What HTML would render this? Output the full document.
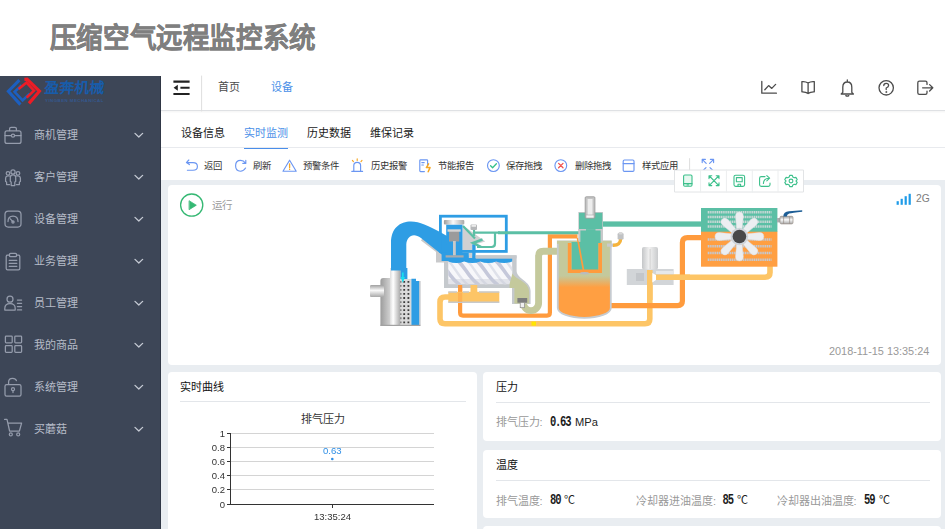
<!DOCTYPE html>
<html lang="zh-CN">
<head>
<meta charset="utf-8">
<title>压缩空气远程监控系统</title>
<style>
*{box-sizing:border-box;margin:0;padding:0}
html,body{width:945px;height:529px;overflow:hidden;background:#fff}
body{font-family:"Liberation Sans",sans-serif;position:relative;color:#333}
.abs{position:absolute}
.t{position:absolute;white-space:nowrap;line-height:1}
#title{left:49.8px;top:25.4px;font-size:26.5px;font-weight:bold;color:#7f7f7f;letter-spacing:.6px;transform:scaleY(1.07);transform-origin:0 50%;-webkit-text-stroke:.35px #7f7f7f}
#sidebar{left:0;top:76px;width:161px;height:480px;background:#3d4657;border-right:1.5px solid #303746}
#app{left:161px;top:76px;width:799px;height:480px;background:#e9edf1}
#topbar{left:161px;top:76px;width:799px;height:35px;background:#fff;box-shadow:0 1px 2px rgba(0,0,0,.05);border-bottom:1px solid #dfe1e4}
#tabs{left:161px;top:110px;width:799px;height:38px;background:#fff;border-bottom:1px solid #e8eaee}
#toolbar{left:161px;top:148px;width:799px;height:32px;background:#fff}
.panel{position:absolute;background:#fff;border-radius:4px}
.menu{position:absolute;left:34px;font-size:11px;color:#b6bcc8;white-space:nowrap;line-height:1}
.tb{position:absolute;top:161.5px;font-size:9.35px;color:#333;white-space:nowrap;line-height:1}
.tab{position:absolute;top:127.5px;font-size:11px;color:#1a1a1a;white-space:nowrap;line-height:1}
.lbl{position:absolute;font-size:11px;color:#999;white-space:nowrap;line-height:1}
.hd{position:absolute;font-size:11px;color:#111;white-space:nowrap;line-height:1}
.val{position:absolute;font-size:11px;color:#222;white-space:nowrap;line-height:1}
.seg{position:absolute;top:0;font-family:"Liberation Mono",monospace;font-weight:bold;font-size:10.5px;letter-spacing:-1.1px;color:#1c1c1c;white-space:nowrap;line-height:1;transform:scaleY(1.36);transform-origin:50% 55%}
.hr{position:absolute;height:1px;background:#e3e6ea}
svg{position:absolute;left:0;top:0;overflow:visible}
#wrap{position:absolute;left:0;top:0;width:960px;height:560px;filter:blur(.38px)}
</style>
</head>
<body>
<div class="t" id="title">压缩空气远程监控系统</div>

<div id="wrap">
<div class="abs" id="sidebar"></div>
<div class="abs" id="app"></div>
<div class="abs" id="tabs"></div>
<div class="abs" id="toolbar"></div>
<div class="abs" id="topbar"></div>

<div class="t" style="left:43.5px;top:80.5px;font-size:14.8px;font-weight:900;color:#185caa;transform:skewX(-4deg);transform-origin:0 100%">盈奔机械</div>
<div class="t" style="left:45px;top:98.8px;font-size:4.4px;font-weight:bold;color:#35588e;letter-spacing:.45px">YINGBEN MECHANICAL</div>
<!-- sidebar menu text -->
<div class="menu" style="top:129.5px">商机管理</div>
<div class="menu" style="top:171.5px">客户管理</div>
<div class="menu" style="top:213.5px">设备管理</div>
<div class="menu" style="top:255.5px">业务管理</div>
<div class="menu" style="top:297.5px">员工管理</div>
<div class="menu" style="top:339.5px">我的商品</div>
<div class="menu" style="top:381.5px">系统管理</div>
<div class="menu" style="top:423.5px">买蘑菇</div>

<!-- topbar -->
<div class="t" style="left:218px;top:82.3px;font-size:11px;color:#4a4a4a">首页</div>
<div class="t" style="left:271px;top:82.3px;font-size:11px;color:#4a90e8">设备</div>

<!-- tabs -->
<div class="tab" style="left:181px">设备信息</div>
<div class="tab" style="left:244px;color:#4a90e8">实时监测</div>
<div class="tab" style="left:307px">历史数据</div>
<div class="tab" style="left:370px">维保记录</div>
<div class="abs" style="left:244px;top:147.8px;width:44px;height:1.6px;background:#4a8eea"></div>

<!-- toolbar text -->
<div class="tb" style="left:204px">返回</div>
<div class="tb" style="left:253px">刷新</div>
<div class="tb" style="left:302.5px">预警条件</div>
<div class="tb" style="left:370.5px">历史报警</div>
<div class="tb" style="left:438px">节能报告</div>
<div class="tb" style="left:506px">保存拖拽</div>
<div class="tb" style="left:574.5px">删除拖拽</div>
<div class="tb" style="left:641.5px">样式应用</div>

<!-- panels -->
<div class="panel" id="p-main" style="left:168px;top:185px;width:773px;height:180px"></div>
<div class="panel" id="p-chart" style="left:168px;top:372px;width:309px;height:170px"></div>
<div class="panel" id="p-press" style="left:483px;top:372px;width:458px;height:69px"></div>
<div class="panel" id="p-temp" style="left:483px;top:450px;width:458px;height:68px"></div>
<div class="panel" id="p-next" style="left:483px;top:526px;width:458px;height:20px"></div>

<div class="t" style="left:211.6px;top:200px;font-size:10.5px;color:#9a9a9a">运行</div>
<div class="t" style="left:916px;top:194.3px;font-size:10.3px;color:#7d7d7d">2G</div>
<div class="t" style="left:829px;top:346px;font-size:10.9px;color:#999">2018-11-15 13:35:24</div>

<!-- chart panel -->
<div class="hd" style="left:180px;top:382px">实时曲线</div>
<div class="hr" style="left:180px;top:401px;width:286px"></div>
<div class="t" style="left:301px;top:413.5px;font-size:11px;color:#333">排气压力</div>

<!-- pressure panel -->
<div class="hd" style="left:495.5px;top:382.4px">压力</div>
<div class="hr" style="left:495.5px;top:401.5px;width:434px"></div>
<div class="lbl" style="left:495.5px;top:417.2px">排气压力:</div>
<div class="seg" style="left:550px;top:417.2px;letter-spacing:-1.25px">0.63</div><div class="val" style="left:574.6px;top:416.4px;font-size:11.7px;transform:scaleX(.95);transform-origin:0 0">MPa</div>

<!-- temperature panel -->
<div class="hd" style="left:495.5px;top:460.1px">温度</div>
<div class="hr" style="left:495.5px;top:480px;width:434px"></div>
<div class="lbl" style="left:495.5px;top:495.5px">排气温度:</div>
<div class="seg" style="left:550px;top:495px">80</div><div class="val" style="left:564.2px;top:495.2px">℃</div>
<div class="lbl" style="left:636px;top:495.5px">冷却器进油温度:</div>
<div class="seg" style="left:722.6px;top:495px">85</div><div class="val" style="left:737.2px;top:495.2px">℃</div>
<div class="lbl" style="left:776.5px;top:495.5px">冷却器出油温度:</div>
<div class="seg" style="left:864px;top:495px">59</div><div class="val" style="left:878.6px;top:495.2px">℃</div>

<!--SVG-ICONS-START-->
<svg id="icons" width="945" height="529" viewBox="0 0 945 529" fill="none" stroke-linecap="round" stroke-linejoin="round">
<!-- logo -->
<g stroke-linecap="butt" stroke-linejoin="miter">
<path d="M19.4 80.2 L8.4 91.2 L20.4 104.6" stroke="#1c5fc0" stroke-width="3.1"/>
<path d="M21.6 85.2 L14.6 91.8 L22.6 100.4 L29.6 93.6" stroke="#1c5fc0" stroke-width="2.6"/>
<path d="M24.4 79.4 L27 79.2 L39.4 91.2 L29 103.4" stroke="#ee1c25" stroke-width="3.2"/>
<path d="M18.6 89 L26.6 82.6 L34 90.6 L26.6 97.6" stroke="#ee1c25" stroke-width="2.6"/>
</g>
<!-- sidebar icons -->
<g stroke="#959cac" stroke-width="1.25">
<!-- briefcase -->
<rect x="5" y="130.8" width="16" height="12.6" rx="2"/>
<path d="M9.6 130.6 V128.8 Q9.6 127.3 11.1 127.3 H14.9 Q16.4 127.3 16.4 128.8 V130.6 M5 135.6 H11.4 M14.6 135.6 H21"/>
<circle cx="13" cy="135.6" r="1.6"/>
<!-- people -->
<circle cx="13" cy="172" r="2.1"/><circle cx="8" cy="173.3" r="1.8"/><circle cx="18" cy="173.3" r="1.8"/>
<path d="M10.3 177.5 Q10.3 174.8 13 174.8 Q15.7 174.8 15.7 177.5 V181.5 L14.8 182 V185.5 H11.2 V182 L10.3 181.5 Z"/>
<path d="M9.8 176 Q5.6 175.3 5.6 178.5 V181.5 L6.6 182 V184.5 H9.6 M16.2 176 Q20.4 175.3 20.4 178.5 V181.5 L19.4 182 V184.5 H16.4"/>
<!-- gauge -->
<rect x="5" y="211" width="16" height="16" rx="3.2"/>
<path d="M8 221.5 Q8 216 13 216 Q18 216 18 221.5 M13 221.8 L10.3 218.8"/>
<circle cx="13" cy="222" r="1.1"/>
<!-- clipboard -->
<path d="M9.5 255.2 H7.6 Q6.2 255.2 6.2 256.6 V268.4 Q6.2 269.8 7.6 269.8 H18.4 Q19.8 269.8 19.8 268.4 V256.6 Q19.8 255.2 18.4 255.2 H16.5"/>
<rect x="9.5" y="253.3" width="7" height="3.4" rx="1"/>
<path d="M9.2 260.3 H16.8 M9.2 263.3 H16.8 M9.2 266.3 H16.8"/>
<!-- staff -->
<circle cx="10" cy="299.2" r="3"/>
<path d="M4.8 310 V308.5 Q4.8 303.6 10 303.6 Q15.2 303.6 15.2 308.5 V310 Z M17.4 300 H21.6 M17.4 303.3 H21.6 M17.4 306.6 H21.6 M17.4 309.9 H21.6"/>
<!-- grid -->
<rect x="5.4" y="336" width="6.8" height="6.8" rx=".8"/><rect x="14.8" y="336" width="6.8" height="6.8" rx=".8"/>
<rect x="5.4" y="345.6" width="6.8" height="6.8" rx=".8"/><rect x="14.8" y="345.6" width="6.8" height="6.8" rx=".8"/>
<!-- lock -->
<rect x="5" y="384.6" width="16" height="11.4" rx="1.6"/>
<path d="M8.6 384.4 V382 Q8.6 378.4 12.6 378.4 Q15.6 378.4 16.4 380.6 M13 390.6 V392.6"/>
<circle cx="13" cy="389.2" r="1.5"/>
<!-- cart -->
<path d="M4.6 419.4 H7 L9.6 431 H19.4 L21.6 423.2 H7.9"/>
<circle cx="10.8" cy="434.4" r="1.5"/><circle cx="18.2" cy="434.4" r="1.5"/>
</g>
<!-- chevrons -->
<g stroke="#c5cad4" stroke-width="1.3">
<path d="M135 133.4 L138.8 137 L142.6 133.4 M135 175.4 L138.8 179 L142.6 175.4 M135 217.4 L138.8 221 L142.6 217.4 M135 259.4 L138.8 263 L142.6 259.4 M135 301.4 L138.8 305 L142.6 301.4 M135 343.4 L138.8 347 L142.6 343.4 M135 385.4 L138.8 389 L142.6 385.4 M135 427.4 L138.8 431 L142.6 427.4"/>
</g>

<!-- topbar left: menu -->
<g stroke="#222" stroke-width="2.1" stroke-linecap="butt">
<path d="M173.4 81.6 H189.6 M180.4 87.8 H189.6 M173.4 94 H189.6"/>
<path d="M173.6 87.8 L177.8 84.8 V90.8 Z" fill="#222" stroke="none"/>
</g>
<path d="M201.6 76 V111" stroke="#dedede" stroke-width="1"/>

<!-- topbar right icons -->
<g stroke="#4c4c4c" stroke-width="1.3">
<path d="M761.8 81.4 V93.2 H776.4 M764.8 89.8 L768.6 85.6 L771.8 88.4 L775.6 84.4"/>
<path d="M808.1 83 V93.6 M808.1 83 Q805.5 81.2 801.9 81.6 V91.8 Q805.5 91.6 808.1 93.4 Q810.7 91.6 814.3 91.8 V81.6 Q810.7 81.2 808.1 83 Z"/>
<path d="M847.3 80 V81.4 M842.8 92.4 V87.2 Q842.8 82 847.3 82 Q851.8 82 851.8 87.2 V92.4 L853.4 94 H841.2 Z M845.8 95.6 Q847.3 96.6 848.8 95.6"/>
<circle cx="886.2" cy="87.8" r="7.2"/>
<path d="M883.8 85.6 Q883.8 83.4 886.2 83.4 Q888.6 83.4 888.6 85.5 Q888.6 87 886.2 88 V89.6" stroke-width="1.3"/>
<circle cx="886.2" cy="92" r=".5" fill="#444" stroke-width=".8"/>
<path d="M927 84.4 V82.8 Q927 81.2 925.4 81.2 H919.4 Q917.8 81.2 917.8 82.8 V92.8 Q917.8 94.4 919.4 94.4 H925.4 Q927 94.4 927 92.8 V91.2 M922.6 87.8 H932.6 M929.6 84.6 L932.8 87.8 L929.6 91"/>
</g>

<!-- toolbar icons -->
<g stroke="#6b96f2" stroke-width="1.15">
<!-- back -->
<path d="M188.8 160 L186.4 162.6 L189.4 164.6 M186.8 162.6 H193 Q197.4 162.6 197.4 166.4 Q197.4 170.2 193 170.2 H187.4"/>
<!-- refresh -->
<path d="M245.6 168 Q243.6 171.2 240.4 171.2 Q235.6 171.2 235.6 165.8 Q235.6 160.4 240.6 160.4 Q243.6 160.4 245.4 163 M245.8 160.4 V163.4 H242.8"/>
<!-- warning -->
<path d="M289.6 160.2 L296.2 171.2 H283 Z" stroke-linejoin="round"/>
<path d="M289.6 164 V167.6 M289.6 169.2 V169.4" stroke="#f5a623" stroke-width="1.3"/>
<!-- alarm history -->
<path d="M353.8 171.2 V165.6 Q353.8 162.4 357.2 162.4 Q360.6 162.4 360.6 165.6 V171.2 M351.8 171.4 H362.6"/>
<path d="M357.2 158.8 V160.4 M352.4 160.4 L353.4 161.6 M362 160.4 L361 161.6" stroke="#f5a623"/>
<!-- energy report -->
<path d="M427.6 165 V160.6 Q427.6 159.8 426.8 159.8 H420.6 Q419.8 159.8 419.8 160.6 V170.8 Q419.8 171.6 420.6 171.6 H424.4 M421.8 162.6 H424.2 M421.8 165 H423.4"/>
<path d="M428.6 163.8 L426.4 167.6 H430 L428.2 171.8" stroke="#f5a623" stroke-width="1.5"/>
<!-- save drag -->
<circle cx="493.4" cy="165.6" r="5.9"/>
<path d="M490.6 165.8 L492.6 167.8 L496.4 163.8" stroke="#35c08a" stroke-width="1.3"/>
<!-- style apply -->
<rect x="623.2" y="160" width="10.8" height="11.4" rx="1.2"/>
<path d="M623.2 163.6 H634"/>
<!-- expand -->
<path d="M702.2 162.6 V159.4 H705.4 M702.4 159.6 L706.2 163.4 M713.6 162.6 V159.4 H710.4 M713.4 159.6 L709.6 163.4 M706 167.6 L702.6 171 M710 167.6 L713.4 171"/>
</g>
<!-- delete drag -->
<circle cx="560.8" cy="165.6" r="5.9" stroke="#6b96f2" stroke-width="1.15"/>
<path d="M558.6 163.4 L563 167.8 M563 163.4 L558.6 167.8" stroke="#f0524f" stroke-width="1.3"/>
<path d="M689.6 158.6 V172" stroke="#ddd" stroke-width="1"/>

<!-- play -->
<circle cx="191.7" cy="205.1" r="11.1" stroke="#35b873" stroke-width="1.3"/>
<path d="M189.4 200.9 L196.3 205.2 L189.4 209.5 Z" fill="#35b873" stroke="#35b873" stroke-width=".8"/>

<!-- signal -->
<g fill="#1e9be8" stroke="none">
<rect x="896.6" y="201.2" width="2.2" height="3.6"/><rect x="900.6" y="198.8" width="2.2" height="6"/><rect x="904.6" y="196.2" width="2.2" height="8.6"/><rect x="908.6" y="193.8" width="2.2" height="11"/>
</g>

<!-- floating toolbar -->
<rect x="674.9" y="170" width="128.6" height="22" fill="#fff" stroke="#e2e4e6" stroke-width="1"/>
<path d="M700.6 170 V192 M726.4 170 V192 M752.3 170 V192 M778 170 V192" stroke="#eceeef" stroke-width="1"/>
<g stroke="#3cc08b" stroke-width="1.1">
<rect x="683.6" y="175" width="8.4" height="11.2" rx="1.2" fill="#e6f8f0"/>
<path d="M683.6 183.6 H692 M687 185 H688.6" />
<path d="M709.4 176 L718.6 185.4 M718.6 176 L709.4 185.4 M709 178.6 V175.8 H711.8 M716.2 175.8 H719 V178.6 M709 182.8 V185.6 H711.8 M716.2 185.6 H719 V182.8"/>
<rect x="734" y="175.2" width="10.6" height="11.2" rx="1.6"/>
<path d="M736.4 177.6 H742.2 V181.8 H736.4 Z M738 186.4 V184.2 H740.6 V186.4"/>
<path d="M765 176.6 H761.2 Q759.6 176.6 759.6 178.2 V184.8 Q759.6 186.4 761.2 186.4 H768.4 Q770 186.4 770 184.8 V183 M763.4 183.4 Q763.6 178.4 769 178.2 M766.8 175.6 L769.6 178.2 L766.8 180.8"/>
<circle cx="791" cy="181" r="1.9"/>
<path d="M789.7 175.4 H792.3 L792.8 177 L794.3 177.8 L795.9 177.4 L797.2 179.6 L796 180.8 V181.2 L797.2 182.4 L795.9 184.6 L794.3 184.2 L792.8 185 L792.3 186.6 H789.7 L789.2 185 L787.7 184.2 L786.1 184.6 L784.8 182.4 L786 181.2 V180.8 L784.8 179.6 L786.1 177.4 L787.7 177.8 L789.2 177 Z"/>
</g>
</svg>

<!--SVG-ICONS-END-->
<!--SVG-CHART-START-->
<svg id="chart" width="945" height="529" viewBox="0 0 945 529" font-family="Liberation Sans, sans-serif">
<g stroke="#d4d4d4" stroke-width="1" shape-rendering="crispEdges">
<path d="M231 433.5 H434 M231 447.5 H434 M231 461.5 H434 M231 475.5 H434 M231 489.5 H434"/>
</g>
<g stroke="#333" stroke-width="1" shape-rendering="crispEdges">
<path d="M230.5 433 V504.5 M227 504.5 H434 M227 433.5 H231 M227 447.5 H231 M227 461.5 H231 M227 475.5 H231 M227 489.5 H231 M332.5 504 V507.5"/>
</g>
<g font-size="9.5" fill="#333" text-anchor="end">
<text x="225" y="436.6">1</text><text x="225" y="450.8">0.8</text><text x="225" y="465">0.6</text><text x="225" y="479.2">0.4</text><text x="225" y="493.4">0.2</text><text x="225" y="507.6">0</text>
</g>
<text x="332.5" y="519.6" font-size="9.5" fill="#333" text-anchor="middle">13:35:24</text>
<text x="332.3" y="453.6" font-size="9.6" fill="#2f8fe6" text-anchor="middle">0.63</text>
<circle cx="332.3" cy="459" r="1.3" fill="#2f8fe6"/>
</svg>

<!--SVG-CHART-END-->
<!--SVG-DIAGRAM-START-->
<svg id="diagram" width="945" height="529" viewBox="0 0 945 529">
<defs>
<linearGradient id="gSilH" x1="0" x2="1" y1="0" y2="0"><stop offset="0" stop-color="#9a9a9a"/><stop offset=".45" stop-color="#fafafa"/><stop offset="1" stop-color="#a8a8a8"/></linearGradient>
<linearGradient id="gSilV" x1="0" x2="0" y1="0" y2="1"><stop offset="0" stop-color="#a0a0a0"/><stop offset=".45" stop-color="#fafafa"/><stop offset="1" stop-color="#a8a8a8"/></linearGradient>
<linearGradient id="gTank" x1="0" x2="0" y1="0" y2="1"><stop offset="0" stop-color="#c4c99c"/><stop offset=".45" stop-color="#c4c99c"/><stop offset=".6" stop-color="#ff9f42"/><stop offset="1" stop-color="#ff9f42"/></linearGradient>
<linearGradient id="gScrew" x1="0" x2="0" y1="0" y2="1"><stop offset="0" stop-color="#d9dbe0"/><stop offset=".5" stop-color="#f6f6f8"/><stop offset="1" stop-color="#cfd1d6"/></linearGradient>
<linearGradient id="gLtSil" x1="0" x2="1" y1="0" y2="0"><stop offset="0" stop-color="#c4c6c8"/><stop offset=".45" stop-color="#f2f2f2"/><stop offset="1" stop-color="#c9cbcd"/></linearGradient>
<linearGradient id="gBodyL" x1="0" x2="1" y1="0" y2="0"><stop offset="0" stop-color="#9c9c9c"/><stop offset="1" stop-color="#d6d6d6"/></linearGradient>
<linearGradient id="gTube" x1="0" x2="1" y1="0" y2="0"><stop offset="0" stop-color="#dcdcdc"/><stop offset=".3" stop-color="#ffffff"/><stop offset="1" stop-color="#a6a6a6"/></linearGradient>
</defs>

<!-- light orange pipes -->
<g fill="none" stroke="#fdc566" stroke-width="5.6" stroke-linejoin="round">
<path d="M450 297 H445 Q440 297 440 302 V319 Q440 323.7 445 323.7 H645 Q649.8 323.7 649.8 319 V270"/>
<path d="M652 277.3 H765 Q770 277.3 770 272.5 V265"/>
</g>
<rect x="531.5" y="321.6" width="4.5" height="4" fill="#ffe600"/>

<!-- dark orange pipes -->
<g fill="none" stroke="#ff9b3d" stroke-linejoin="round">
<path d="M460.1 285 V312.5 Q460.1 315.6 463 315.6 H547 Q549.9 315.6 549.9 312.5 V236.4 H577.5" stroke-width="4.2" stroke-linejoin="miter"/>
<path d="M610 305.7 H677.5 Q682.4 305.7 682.4 301 V242.5 Q682.4 237.6 687.4 237.6 H702" stroke-width="5.2"/>
</g>

<!-- olive pipe -->
<path d="M523.4 300 V303 A7.6 7.6 0 0 0 538.6 303 V256 Q538.6 251.2 543.5 251.2 H558" fill="none" stroke="#c4c99c" stroke-width="6.9"/>

<!-- teal right pipe -->
<rect x="600" y="221.4" width="102" height="5.3" fill="#5bbfa5"/>

<!-- air filter -->
<rect x="370" y="285" width="16" height="12" rx="2" fill="url(#gSilV)"/>
<path d="M380.4 281 Q380.4 278 383.4 278 H391 V325.7 H380.4 Z" fill="url(#gBodyL)"/>
<rect x="370" y="285" width="14" height="12" rx="1.5" fill="url(#gSilV)"/>
<rect x="390" y="268" width="10.6" height="57.7" fill="url(#gTube)"/>
<rect x="400.5" y="279" width="11" height="46.7" fill="#dadada"/>
<path d="M403.3 280.90h1.8v1.8h-1.8zM407.5 280.90h1.8v1.8h-1.8zM400.5 280.90h.8v1.8h-.8zM403.3 284.95h1.8v1.8h-1.8zM407.5 284.95h1.8v1.8h-1.8zM400.5 284.95h.8v1.8h-.8zM403.3 289.00h1.8v1.8h-1.8zM407.5 289.00h1.8v1.8h-1.8zM400.5 289.00h.8v1.8h-.8zM403.3 293.05h1.8v1.8h-1.8zM407.5 293.05h1.8v1.8h-1.8zM400.5 293.05h.8v1.8h-.8zM403.3 297.10h1.8v1.8h-1.8zM407.5 297.10h1.8v1.8h-1.8zM400.5 297.10h.8v1.8h-.8zM403.3 301.15h1.8v1.8h-1.8zM407.5 301.15h1.8v1.8h-1.8zM400.5 301.15h.8v1.8h-.8zM403.3 305.20h1.8v1.8h-1.8zM407.5 305.20h1.8v1.8h-1.8zM400.5 305.20h.8v1.8h-.8zM403.3 309.25h1.8v1.8h-1.8zM407.5 309.25h1.8v1.8h-1.8zM400.5 309.25h.8v1.8h-.8zM403.3 313.30h1.8v1.8h-1.8zM407.5 313.30h1.8v1.8h-1.8zM400.5 313.30h.8v1.8h-.8zM403.3 317.35h1.8v1.8h-1.8zM407.5 317.35h1.8v1.8h-1.8zM400.5 317.35h.8v1.8h-.8zM403.3 321.40h1.8v1.8h-1.8zM407.5 321.40h1.8v1.8h-1.8zM400.5 321.40h.8v1.8h-.8z" fill="#3c3c3c"/>
<path d="M411.4 278.8 H416 V281 H419.4 V325.7 H411.4 Z" fill="#2e9de4"/>
<rect x="400.5" y="268" width="6.9" height="11" fill="#2e9de4"/>
<rect x="419.4" y="281" width="1.1" height="44.7" fill="#b9bcc0"/>
<rect x="380.4" y="324.8" width="40" height="1.2" fill="#a2a2a2"/>

<!-- screw housing -->
<path d="M444 255.6 H516.6 V271 C517 279 530.6 281 530.6 291 V304 H512 V288 H444 Z" fill="#c5c9cd"/>
<path d="M436 249 H446 V262.5 H436 Z" fill="#c8c9cb"/>
<rect x="448.3" y="260" width="63.9" height="24.3" fill="url(#gScrew)"/>
<clipPath id="cScrew"><rect x="448.3" y="260" width="63.9" height="24.3"/></clipPath>
<g clip-path="url(#cScrew)" fill="none">
<rect x="448.3" y="260" width="63.9" height="24.3" fill="#f7f7fa"/>
<path d="M436 259 C445 263 448 277 460 285 M455 259 C464 263 467 277 479 285 M474 259 C483 263 486 277 498 285 M493 259 C502 263 505 277 517 285 " stroke="#c5c8da" stroke-width="3.6"/>
<path d="M446 259 C454 264 457 276 468 285 M465 259 C473 264 476 276 487 285 M484 259 C492 264 495 276 506 285 M503 259 C511 264 514 276 525 285 " stroke="#dfe1ea" stroke-width="2.4"/>
<rect x="448.3" y="279" width="63.9" height="5.3" fill="#c9ccd6" opacity=".45"/>
</g>
<path d="M448.3 258.5 h63.9 v3 q-8 3 -16 0 q-8 3 -16 0 q-8 3 -16 0 q-8 3 -15.9 0z" fill="#2e9de4"/>
<path d="M509.5 284.3 L512.4 273.5 C516 280 529.2 281.5 529.2 292 V303.5 H514.4 V288 H509.5 Z" fill="#c4c99c"/>

<!-- blue intake pipe -->
<path d="M422 239 L445 256.5" stroke="#c9c9c9" stroke-width="3.5" fill="none"/>
<path d="M391 270.5 V243 C391 228 400 221.5 411 221.5 C420 221.5 428 226 440 232 L447 236 V257 L441 254 L421 238 C417 235 413.5 234.5 411 236 C407.5 238 406.3 241 406.3 246 V270.5 Z" fill="#2e9de4"/>
<path d="M402.8 272.5 v6.5 M401.4 277 l1.4 3.6 l1.4 -3.6" stroke="#19e0ee" stroke-width="1.7" fill="none"/>

<!-- intake valve -->
<path d="M462.5 225 L485.3 241.4 L475.5 244.3 H472.2 V258 H468.8 V252.8 H462.5 Z" fill="#cfd0d2"/>
<rect x="440.4" y="216.2" width="65.9" height="35.2" fill="none" stroke="#2e9de4" stroke-width="2.8"/>
<path d="M446.2 224.4 H462.5 V252.8 H468.8 V258 H472.2 V244.3 H475.6 V258.4 H476 V261 H441.6 V252.8 H446.2 Z" fill="#2e9de4"/>
<rect x="475.6" y="255.2" width="41" height="3.2" fill="#c5c9cd"/>
<rect x="443.9" y="220" width="20.4" height="4.6" rx="1" fill="url(#gSilH)"/>
<rect x="449" y="230" width="10.2" height="11.5" fill="#9b9b9b"/>
<rect x="447.5" y="229.3" width="13.2" height="2.4" fill="#d4d4d4"/>
<rect x="453" y="241" width="2.8" height="14.5" fill="#c9c9c9"/>
<rect x="445.6" y="255.3" width="18" height="2.2" fill="#a9abad"/>
<g fill="none" stroke="#5bbfa5" stroke-width="2.2">
<path d="M463 226 L475 238.5 M474 229 V236 M474 232.6 H500 M477 247 H491.5 Q495 247 495 243.5 V232.6"/>
<path d="M498 232.8 H580" stroke-width="3.1"/>
<path d="M482.5 239.5 L473 243 L481 246.8" stroke-width="2.4"/>
</g>
<rect x="470.5" y="224.4" width="6.5" height="5.6" rx="1" fill="#b5b7b9"/>
<rect x="471.5" y="224.8" width="4.5" height="2" fill="#ececec"/>

<!-- oil manifold -->
<rect x="458" y="285" width="4.2" height="12" fill="#ff9b3d"/>
<rect x="448.3" y="291.8" width="51" height="10.6" fill="#fdc566"/>
<path d="M448.3 292 H457 M463 292 H469 M479 292 H499.3 M448.3 302.2 H499.3" stroke="#c7c9cb" stroke-width="1.5" fill="none"/>
<rect x="470.5" y="285" width="6.8" height="9" fill="#fdc566"/>
<rect x="458" y="292.5" width="4.2" height="9.5" fill="#ff9b3d" opacity=".45"/>

<!-- small bolt at outlet -->
<rect x="517.4" y="298" width="9.8" height="4.7" fill="#7d7d7d"/>
<rect x="520.2" y="302.5" width="4.3" height="5.2" fill="#f0f0f0" stroke="#8a8a8a" stroke-width=".7"/>

<!-- separator tank -->
<path d="M557.8 241.5 H610.8 V308 A26.5 9.8 0 0 1 557.8 308 Z" fill="url(#gTank)" stroke="#c6cbd0" stroke-width="1.8"/>
<rect x="557" y="240.8" width="54.5" height="3" fill="#c4c99c"/>
<rect x="571.5" y="242" width="27" height="29.5" fill="#5bbfa5"/>
<path d="M569.6 243 V271.3 H600.2 V243" fill="none" stroke="#ff9b3d" stroke-width="3.6"/>
<ellipse cx="584.5" cy="273.2" rx="4.5" ry="1.2" fill="#b9bcbf"/>
<path d="M577.5 238 L583.6 271" stroke="#ff9b3d" stroke-width="1.7" fill="none"/>

<!-- min pressure valve (top body) -->
<rect x="578.3" y="212" width="24.7" height="29.5" fill="#c8c9cb"/>
<rect x="579" y="212.8" width="23.3" height="17" fill="#5bbfa5"/>
<rect x="580.4" y="229.6" width="20.2" height="13.4" fill="#5bbfa5"/>
<path d="M578.3 229.7 H586 M595.5 229.7 H603" stroke="#c8c9cb" stroke-width="1.4"/>
<rect x="585.2" y="196.8" width="9.7" height="21.2" rx="1" fill="#c4c4c4" stroke="#9c9c9c" stroke-width=".9"/>
<rect x="587.6" y="199" width="4.9" height="16" fill="#ededed"/>
<rect x="586" y="215" width="8" height="3" fill="#f4f4f4" stroke="#a8a8a8" stroke-width=".6"/>

<!-- fitting on tank right -->
<rect x="607" y="243.5" width="6.5" height="3.2" fill="#c9cacc"/>
<path d="M613 245.2 Q620.5 245.5 620.7 238.5" fill="none" stroke="#f5b33c" stroke-width="3.4"/>
<rect x="617.6" y="233" width="6" height="6.5" rx="1.2" fill="#c0c2c4"/>
<rect x="618.6" y="232" width="4" height="2.5" rx="1" fill="#d8d8d8"/>

<!-- thermostat valve -->
<rect x="626.8" y="269" width="46.8" height="16" fill="#d2d5d8"/>
<rect x="636" y="273" width="8" height="8" fill="#c3c6ca"/>
<rect x="642" y="247" width="16" height="22.5" rx="2" fill="url(#gLtSil)"/>
<rect x="649.6" y="249" width="1" height="20" fill="#d0d0d0"/>
<rect x="656" y="271" width="17.6" height="3" fill="#e6e8ea"/>
<path d="M649.8 270 V300" stroke="#fdc566" stroke-width="5.6" fill="none"/>
<path d="M652 277.3 H690" stroke="#fdc566" stroke-width="5.6" fill="none"/>
<path d="M652.3 273 L656 275 V280 L652.3 282.5Z" fill="#fff"/>

<!-- cooler -->
<rect x="701" y="208" width="76.4" height="24" fill="#5bbfa5"/>
<rect x="701" y="231.7" width="76.4" height="35" fill="#ff9f42"/>
<g stroke-width="2.5" stroke-dasharray="1.3 .55" fill="none">
<path d="M707.7 212.2 H771.5 M707.7 217 H771.5 M707.7 221.8 H771.5 M707.7 226.6 H771.5" stroke="#c9d8d6"/>
<path d="M707.7 239.6 H771.5 M707.7 246.3 H771.5 M707.7 253 H771.5 M707.7 259.8 H771.5" stroke="#c3c9d3"/>
</g>
<g fill="#eceef1" stroke="#dcdfe3" stroke-width=".5"><path d="M-2.5 -6 L-3.9 -20 Q-3.9 -24.4 0 -24.4 Q3.9 -24.4 3.9 -20 L2.5 -6 Z" transform="translate(739.4 236.5) rotate(0)"/><path d="M-2.5 -6 L-3.9 -20 Q-3.9 -24.4 0 -24.4 Q3.9 -24.4 3.9 -20 L2.5 -6 Z" transform="translate(739.4 236.5) rotate(45)"/><path d="M-2.5 -6 L-3.9 -20 Q-3.9 -24.4 0 -24.4 Q3.9 -24.4 3.9 -20 L2.5 -6 Z" transform="translate(739.4 236.5) rotate(90)"/><path d="M-2.5 -6 L-3.9 -20 Q-3.9 -24.4 0 -24.4 Q3.9 -24.4 3.9 -20 L2.5 -6 Z" transform="translate(739.4 236.5) rotate(135)"/><path d="M-2.5 -6 L-3.9 -20 Q-3.9 -24.4 0 -24.4 Q3.9 -24.4 3.9 -20 L2.5 -6 Z" transform="translate(739.4 236.5) rotate(180)"/><path d="M-2.5 -6 L-3.9 -20 Q-3.9 -24.4 0 -24.4 Q3.9 -24.4 3.9 -20 L2.5 -6 Z" transform="translate(739.4 236.5) rotate(225)"/><path d="M-2.5 -6 L-3.9 -20 Q-3.9 -24.4 0 -24.4 Q3.9 -24.4 3.9 -20 L2.5 -6 Z" transform="translate(739.4 236.5) rotate(270)"/><path d="M-2.5 -6 L-3.9 -20 Q-3.9 -24.4 0 -24.4 Q3.9 -24.4 3.9 -20 L2.5 -6 Z" transform="translate(739.4 236.5) rotate(315)"/></g>
<circle cx="739.4" cy="236.5" r="8.8" fill="#cfd4da"/>
<circle cx="739.4" cy="236.5" r="6.8" fill="#48484a"/>

<!-- tap -->
<rect x="777" y="218" width="3.4" height="4.4" fill="#a9adb0"/>
<rect x="780" y="216.3" width="13" height="7.6" rx="1.3" fill="url(#gSilV)" stroke="#9a8f88" stroke-width=".7"/>
<path d="M783.6 216.3 V223.9 M789.6 216.3 V223.9" stroke="#9a8f88" stroke-width=".7"/>
<path d="M783.3 216.4 Q783.4 211.6 789 211.2 L802.2 210.3 L802.2 211.7 Q792 212.6 789.2 213.6 Q786.8 214.5 786.8 216.4 Z" fill="#1d5e96"/>
</svg>

<!--SVG-DIAGRAM-END-->
</div>
</body>
</html>
